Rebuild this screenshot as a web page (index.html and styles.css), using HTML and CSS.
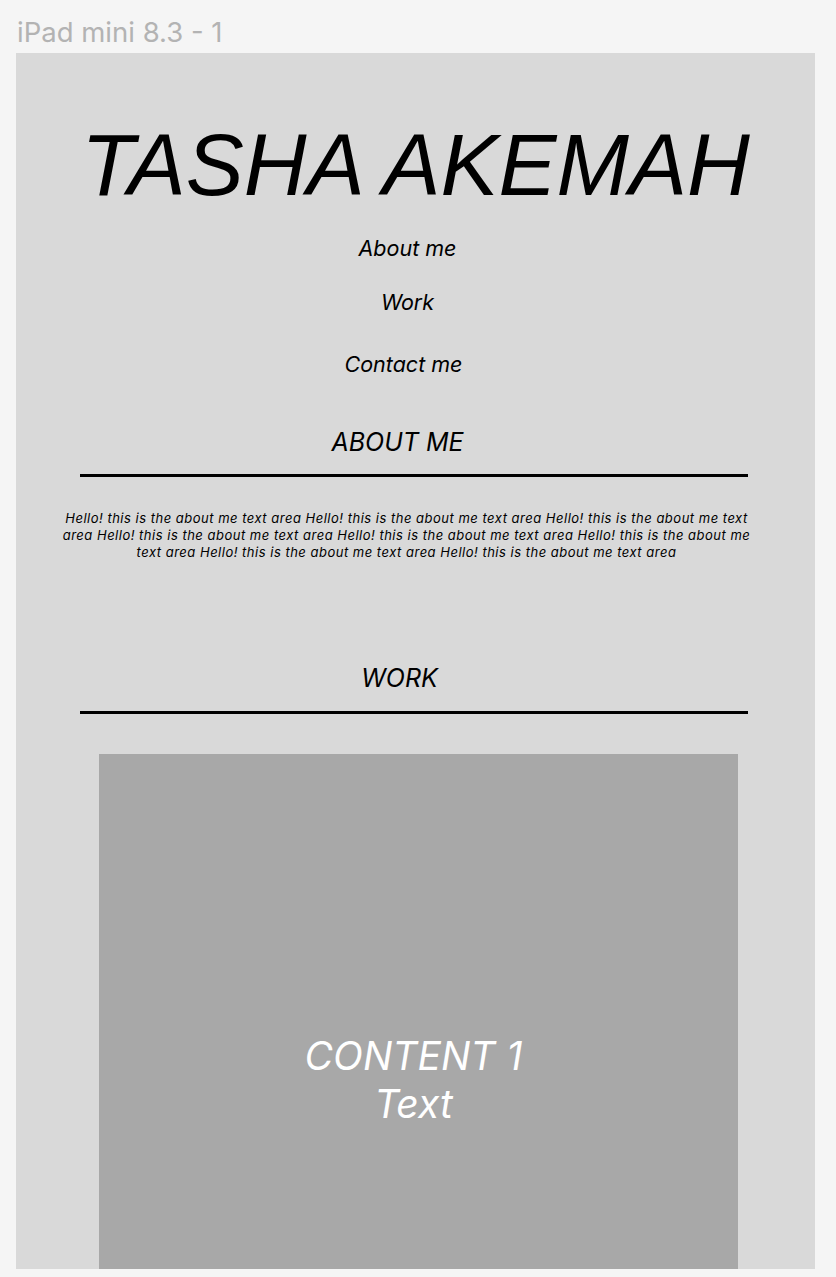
FILE: index.html
```html
<!DOCTYPE html>
<html>
<head>
<meta charset="utf-8">
<link rel="stylesheet" href="styles.css">
</head>
<body>
<div class="label">iPad mini 8.3 - 1</div>
<div class="frame">
  <h1 class="title">TASHA AKEMAH</h1>
  <nav class="nav">
    <a class="nav-about">About me</a>
    <a class="nav-work">Work</a>
    <a class="nav-contact">Contact me</a>
  </nav>
  <section class="about">
    <h2 class="heading">ABOUT ME</h2>
    <div class="rule"></div>
    <p class="about-text">Hello! this is the about me text area Hello! this is the about me text area Hello! this is the about me text area Hello! this is the about me text area Hello! this is the about me text area Hello! this is the about me text area Hello! this is the about me text area Hello! this is the about me text area</p>
  </section>
  <section class="work">
    <h2 class="heading">WORK</h2>
    <div class="rule"></div>
    <div class="card">
      <div class="card-text">CONTENT 1<br>Text</div>
    </div>
  </section>
</div>
</body>
</html>
```
FILE: styles.css
```css
html, body {
  margin: 0;
  padding: 0;
  background: #f5f5f5;
  height: 1277px;
  overflow: hidden;
}
.label {
  height: 53px;
  box-sizing: border-box;
  padding: 16px 0 0 17px;
  font-family: Inter, "Liberation Sans", sans-serif;
  font-size: 27.5px;
  line-height: 32px;
  color: #b3b3b3;
}
.frame {
  margin-left: 16px;
  width: 799px;
  height: 1216px;
  background: #d9d9d9;
  overflow: hidden;
  display: flex;
  flex-direction: column;
  align-items: center;
}
.title {
  margin: 62px 0 0 0;
  font-family: "Liberation Sans", Arial, sans-serif;
  font-style: italic;
  font-weight: 400;
  font-size: 87px;
  line-height: 100px;
  color: #000;
  white-space: nowrap;
}
.nav {
  display: flex;
  flex-direction: column;
  align-items: center;
  margin-left: -16px;
  font-family: Inter, "Liberation Sans", sans-serif;
  font-style: italic;
  font-size: 21.5px;
  color: #000;
}
.nav a { display: block; line-height: 26px; }
.nav-about { margin-top: 20px; }
.nav-work { margin-top: 28px; }
.nav-contact { margin-top: 36px; margin-left: -8px; }
.about, .work {
  display: flex;
  flex-direction: column;
  align-items: center;
  width: 100%;
}
.heading {
  margin: 0;
  font-family: Inter, "Liberation Sans", sans-serif;
  font-style: italic;
  font-weight: 400;
  font-size: 25px;
  line-height: 30px;
  color: #000;
}
.about .heading { margin-top: 50px; margin-left: -36px; }
.work .heading { margin-top: 102px; margin-left: -32px; }
.rule {
  width: 668px;
  height: 3px;
  background: #000;
  margin-top: 17px;
  margin-left: -4px;
}
.work .rule { margin-top: 18px; }
.about-text {
  margin: 33px 0 0 0;
  width: 690px;
  text-align: center;
  font-family: Inter, "Liberation Sans", sans-serif;
  font-style: italic;
  font-size: 13px;
  letter-spacing: 0.5px;
  line-height: 17px;
  color: #000;
  margin-left: -18px;
}
.card {
  margin-top: 40px;
  align-self: flex-start;
  margin-left: 83px;
  width: 639px;
  height: 560px;
  background: #a8a8a8;
  display: flex;
  justify-content: center;
}
.card-text {
  margin-top: 278px;
  text-align: center;
  font-family: Inter, "Liberation Sans", sans-serif;
  font-style: italic;
  font-size: 39px;
  line-height: 48px;
  color: #fff;
  margin-left: -10px;
}
```
